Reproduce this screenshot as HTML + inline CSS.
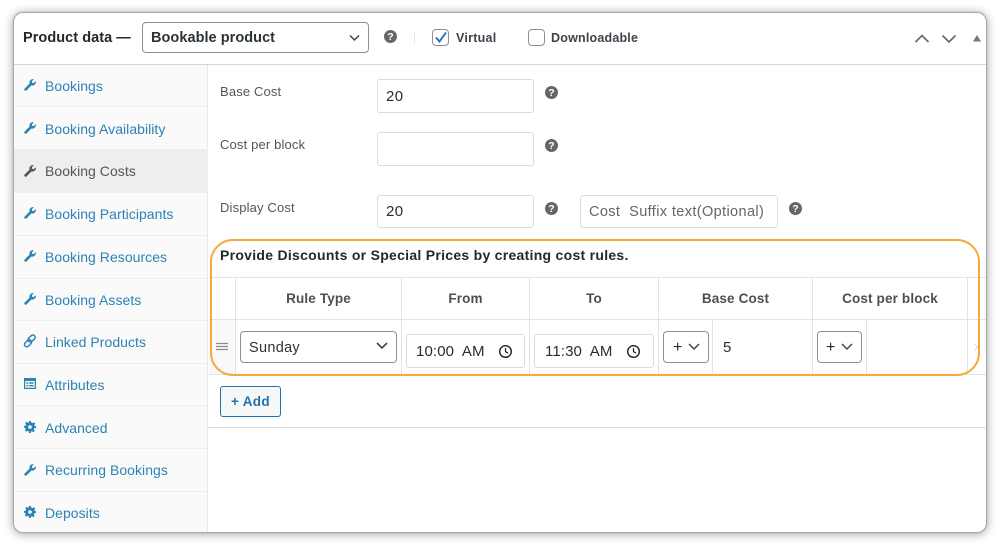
<!DOCTYPE html>
<html><head><meta charset="utf-8"><style>
html,body{margin:0;padding:0;width:1000px;height:547px;overflow:hidden;background:#fff;font-family:"Liberation Sans",sans-serif}
*{box-sizing:border-box}
#wrap{position:absolute;left:0;top:0;width:1000px;height:547px;overflow:hidden;filter:blur(.3px)}
.a,.t,.l{position:absolute}
#card{position:absolute;left:14px;top:13px;width:972px;height:519px;background:#fff;border-radius:9px;box-shadow:0 0 1px 1px #a0a0a0,0 1px 9px 2px rgba(0,0,0,.3);overflow:hidden}
#side{position:absolute;left:14px;top:65px;width:194px;height:467px;background:#fafafa;border-right:1px solid #e8e8e8;border-bottom-left-radius:9px}
.t{white-space:nowrap;line-height:18px}
.nav{left:45px;font-size:14px;color:#2b83b3;letter-spacing:.04px}
.sep{position:absolute;left:14px;width:193px;height:1px;background:#eeeeee}
.l{background:#e3e3e3}
.inp{position:absolute;background:#fff;border:1px solid #dcdcde;border-radius:3px}
.sel{position:absolute;background:#fff;border:1px solid #8c8f94;border-radius:4px}
.lab{font-size:13px;color:#555;left:220px;letter-spacing:.15px}
.val{font-size:15px;color:#2c2c2c;letter-spacing:.4px}
.th{font-size:13.5px;font-weight:bold;color:#4f4f4f;letter-spacing:.15px;text-align:center}
svg{position:absolute;overflow:visible}
.q circle{fill:#666}
.q text{font-size:10.5px;font-weight:bold;fill:#fff;text-anchor:middle;font-family:"Liberation Sans",sans-serif}
</style></head><body><div id="wrap">
<div id="card"></div>
<div class="a" style="left:14px;top:64px;width:972px;height:1px;background:#d5d5d5"></div>
<div id="side"></div>

<div class="t" style="left:23px;top:29px;font-size:14.5px;font-weight:bold;color:#23282d;letter-spacing:.05px">Product data —</div>
<div class="sel" style="left:142px;top:22px;width:227px;height:31px"></div>
<div class="t" style="left:151px;top:29px;font-size:14.5px;font-weight:bold;color:#2c3338;letter-spacing:.05px">Bookable product</div>
<svg style="left:349px;top:34px" width="12" height="8"><path d="M1 1.5L5.5 6L10 1.5" fill="none" stroke="#40464d" stroke-width="1.5"/></svg>

<svg class="q" style="left:383.5px;top:30px" width="13" height="13"><circle cx="6.5" cy="6.5" r="6.5"/><text x="6.5" y="10.2">?</text></svg>
<div class="a" style="left:414px;top:31px;width:1px;height:14px;background:#e8e8e8"></div>
<div class="a" style="left:432px;top:29px;width:17px;height:17px;border:1px solid #8c8f94;border-radius:4px;background:#fff"></div>
<svg style="left:434px;top:31px" width="14" height="13"><path d="M2 6.5L5.5 10.5L12 1.5" fill="none" stroke="#2271b1" stroke-width="1.9"/></svg>
<div class="t" style="left:456px;top:29px;font-size:12.5px;font-weight:bold;color:#3c434a;letter-spacing:.25px">Virtual</div>
<div class="a" style="left:528px;top:29px;width:17px;height:17px;border:1px solid #8c8f94;border-radius:4px;background:#fff"></div>
<div class="t" style="left:551px;top:29px;font-size:12.5px;font-weight:bold;color:#3c434a;letter-spacing:.2px">Downloadable</div>
<svg style="left:915px;top:34px" width="14" height="10"><path d="M.5 8L7 1.5L13.5 8" fill="none" stroke="#666" stroke-width="1.6"/></svg>
<svg style="left:942px;top:34px" width="14" height="10"><path d="M.5 1.5L7 8L13.5 1.5" fill="none" stroke="#666" stroke-width="1.6"/></svg>
<svg style="left:973px;top:35px" width="10" height="7"><path d="M0 6.5L4 0L8 6.5Z" fill="#777"/></svg>

<div class="sep" style="top:106px"></div>
<div class="sep" style="top:149px"></div>
<div class="sep" style="top:192px"></div>
<div class="sep" style="top:235px"></div>
<div class="sep" style="top:278px"></div>
<div class="sep" style="top:320px"></div>
<div class="sep" style="top:363px"></div>
<div class="sep" style="top:405px"></div>
<div class="sep" style="top:448px"></div>
<div class="sep" style="top:491px"></div>
<div class="a" style="left:14px;top:149px;width:194px;height:43px;background:#eeeeee"></div>

<svg width="0" height="0"><defs>
<symbol id="w" viewBox="0 0 12 12"><path d="M11.6 2.6a3.2 3.2 0 0 1-4.2 3.6L2.5 11.2a1.1 1.1 0 0 1-1.7-1.6L5.8 4.6A3.2 3.2 0 0 1 9.4.4L7.6 2.3l.4 1.7 1.7.4z" stroke-width=".5"/></symbol>
<symbol id="g" viewBox="0 0 12 12"><path d="M5 0h2l.3 1.6 1.1.5L9.8 1.2l1.4 1.4-.9 1.4.5 1.1L12 5v2l-1.7.3-.5 1.1.9 1.4-1.4 1.4-1.4-.9-1.1.5L7 12H5l-.3-1.7-1.1-.5-1.4.9L.8 9.3l.9-1.4-.5-1L0 6.6V5l1.6-.3.5-1.1-.9-1.4L2.6.8 4 1.7l1-.4zM6 4.2a1.8 1.8 0 1 0 0 3.6 1.8 1.8 0 0 0 0-3.6z" fill-rule="evenodd"/></symbol>
</defs></svg>
<svg style="left:24px;top:79px" width="12" height="12" fill="#2b83b3" stroke="#2b83b3"><use href="#w"/></svg>
<svg style="left:24px;top:122px" width="12" height="12" fill="#2b83b3" stroke="#2b83b3"><use href="#w"/></svg>
<svg style="left:24px;top:165px" width="12" height="12" fill="#555" stroke="#555"><use href="#w"/></svg>
<svg style="left:24px;top:207px" width="12" height="12" fill="#2b83b3" stroke="#2b83b3"><use href="#w"/></svg>
<svg style="left:24px;top:250px" width="12" height="12" fill="#2b83b3" stroke="#2b83b3"><use href="#w"/></svg>
<svg style="left:24px;top:293px" width="12" height="12" fill="#2b83b3" stroke="#2b83b3"><use href="#w"/></svg>
<svg style="left:24px;top:335px" width="12" height="12"><g fill="none" stroke="#2b83b3" stroke-width="1.5"><rect x="5.3" y="-.5" width="4.6" height="8" rx="2.3" transform="rotate(45 7.6 3.5)"/><rect x="1.7" y="4.3" width="4.6" height="8" rx="2.3" transform="rotate(45 4 8.3)"/></g></svg>
<svg style="left:24px;top:378px" width="12" height="11"><path d="M0 0h12v11H0zM1.2 3v6.8h9.6V3zM2.4 4.3h1.8v1.4H2.4zM5.2 4.3h4.4v1.4H5.2zM2.4 7h1.8v1.4H2.4zM5.2 7h4.4v1.4H5.2z" fill="#2b83b3" fill-rule="evenodd"/></svg>
<svg style="left:24px;top:421px" width="12" height="12" fill="#2b83b3"><use href="#g"/></svg>
<svg style="left:24px;top:464px" width="12" height="12" fill="#2b83b3" stroke="#2b83b3"><use href="#w"/></svg>
<svg style="left:24px;top:506px" width="12" height="12" fill="#2b83b3"><use href="#g"/></svg>

<div class="t nav" style="top:77px">Bookings</div>
<div class="t nav" style="top:120px">Booking Availability</div>
<div class="t nav" style="top:162px;color:#555">Booking Costs</div>
<div class="t nav" style="top:205px">Booking Participants</div>
<div class="t nav" style="top:248px">Booking Resources</div>
<div class="t nav" style="top:291px">Booking Assets</div>
<div class="t nav" style="top:333px">Linked Products</div>
<div class="t nav" style="top:376px">Attributes</div>
<div class="t nav" style="top:418.5px">Advanced</div>
<div class="t nav" style="top:461px">Recurring Bookings</div>
<div class="t nav" style="top:504px">Deposits</div>

<div class="t lab" style="top:82.5px">Base Cost</div>
<div class="t lab" style="top:135.5px">Cost per block</div>
<div class="t lab" style="top:198.5px">Display Cost</div>
<div class="inp" style="left:377px;top:79px;width:157px;height:34px"></div>
<div class="inp" style="left:377px;top:132px;width:157px;height:34px"></div>
<div class="inp" style="left:377px;top:195px;width:157px;height:33px"></div>
<div class="inp" style="left:580px;top:195px;width:198px;height:33px"></div>
<div class="t val" style="left:386px;top:87.5px">20</div>
<div class="t val" style="left:386px;top:203px">20</div>
<div class="t" style="left:589px;top:203px;font-size:14.5px;color:#666;letter-spacing:.38px;white-space:pre">Cost  Suffix text(Optional)</div>
<svg class="q" style="left:544.5px;top:86px" width="13" height="13"><circle cx="6.5" cy="6.5" r="6.5"/><text x="6.5" y="10.2">?</text></svg>
<svg class="q" style="left:544.5px;top:139px" width="13" height="13"><circle cx="6.5" cy="6.5" r="6.5"/><text x="6.5" y="10.2">?</text></svg>
<svg class="q" style="left:544.5px;top:202px" width="13" height="13"><circle cx="6.5" cy="6.5" r="6.5"/><text x="6.5" y="10.2">?</text></svg>
<svg class="q" style="left:789px;top:202px" width="13" height="13"><circle cx="6.5" cy="6.5" r="6.5"/><text x="6.5" y="10.2">?</text></svg>

<div class="t" style="left:220px;top:245.5px;font-size:14px;font-weight:bold;color:#23282d;letter-spacing:.28px">Provide Discounts or Special Prices by creating cost rules.</div>

<div class="a" style="left:209px;top:320px;width:27px;height:55px;background:#f9f9f9"></div>
<div class="l" style="left:209px;top:277px;width:777px;height:1px"></div>
<div class="l" style="left:209px;top:319px;width:777px;height:1px"></div>
<div class="l" style="left:209px;top:374px;width:777px;height:1px"></div>
<div class="l" style="left:235px;top:277px;width:1px;height:98px"></div>
<div class="l" style="left:401px;top:277px;width:1px;height:98px"></div>
<div class="l" style="left:529px;top:277px;width:1px;height:98px"></div>
<div class="l" style="left:658px;top:277px;width:1px;height:98px"></div>
<div class="l" style="left:812px;top:277px;width:1px;height:98px"></div>
<div class="l" style="left:967px;top:277px;width:1px;height:98px"></div>
<div class="l" style="left:712px;top:320px;width:1px;height:55px"></div>
<div class="l" style="left:866px;top:320px;width:1px;height:55px"></div>

<div class="t th" style="left:236px;width:165px;top:290px">Rule Type</div>
<div class="t th" style="left:402px;width:127px;top:290px">From</div>
<div class="t th" style="left:530px;width:128px;top:290px">To</div>
<div class="t th" style="left:659px;width:153px;top:290px">Base Cost</div>
<div class="t th" style="left:813px;width:154px;top:290px">Cost per block</div>

<svg style="left:216px;top:343px" width="12" height="8"><path d="M0 .5h12M0 3.5h12M0 6.5h12" stroke="#8a8a8a" stroke-width="1.2"/></svg>
<div class="sel" style="left:240px;top:331px;width:157px;height:32px"></div>
<div class="t" style="left:249px;top:338.5px;font-size:14.5px;color:#2c3338;letter-spacing:.3px">Sunday</div>
<svg style="left:376px;top:342px" width="12" height="8"><path d="M1 1L6 6L11 1" fill="none" stroke="#40464d" stroke-width="1.6"/></svg>

<div class="inp" style="left:406px;top:334px;width:119px;height:34px"></div>
<div class="t val" style="left:416px;top:342.5px;white-space:pre;letter-spacing:.12px">10:00  AM</div>
<svg style="left:499px;top:344.5px" width="13" height="13"><circle cx="6.5" cy="6.5" r="5.8" fill="none" stroke="#222" stroke-width="1.4"/><path d="M6.5 3v3.7l2.5 1.5" fill="none" stroke="#222" stroke-width="1.2"/></svg>
<div class="inp" style="left:534px;top:334px;width:120px;height:34px"></div>
<div class="t val" style="left:545px;top:342.5px;white-space:pre;letter-spacing:.12px">11:30  AM</div>
<svg style="left:627px;top:344.5px" width="13" height="13"><circle cx="6.5" cy="6.5" r="5.8" fill="none" stroke="#222" stroke-width="1.4"/><path d="M6.5 3v3.7l2.5 1.5" fill="none" stroke="#222" stroke-width="1.2"/></svg>

<div class="sel" style="left:663px;top:331px;width:46px;height:32px"></div>
<div class="t" style="left:673px;top:338.5px;font-size:16px;color:#2c2c2c">+</div>
<svg style="left:688px;top:343px" width="12" height="8"><path d="M1 1L6 6L11 1" fill="none" stroke="#40464d" stroke-width="1.5"/></svg>
<div class="t val" style="left:723px;top:338.5px">5</div>
<div class="sel" style="left:817px;top:331px;width:45px;height:32px"></div>
<div class="t" style="left:826px;top:338.5px;font-size:16px;color:#2c2c2c">+</div>
<svg style="left:841px;top:343px" width="12" height="8"><path d="M1 1L6 6L11 1" fill="none" stroke="#40464d" stroke-width="1.5"/></svg>
<div class="t" style="left:974px;top:338px;font-size:13px;color:#ddd">x</div>

<div class="a" style="left:210px;top:239px;width:770px;height:137px;border:2px solid #f5a93c;border-radius:23px"></div>

<div class="a" style="left:220px;top:386px;width:61px;height:31px;border:1px solid #2271b1;border-radius:3px;background:#f6f7f7"></div>
<div class="t" style="left:231px;top:393px;font-size:13.5px;font-weight:bold;color:#2271b1;letter-spacing:.3px">+ Add</div>
<div class="a" style="left:208px;top:427px;width:778px;height:1px;background:#dedede"></div>
</div></body></html>
